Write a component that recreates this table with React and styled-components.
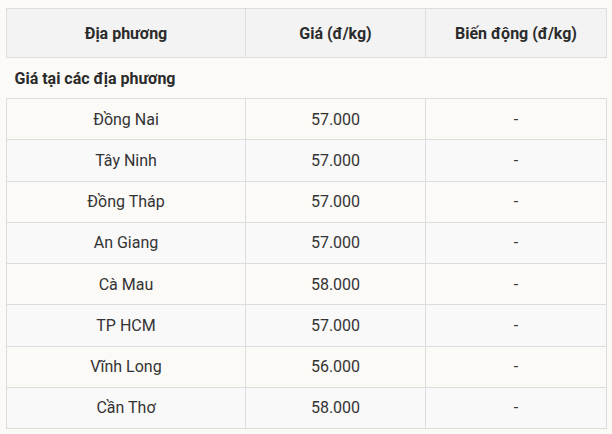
import React from "react";
import styled, { createGlobalStyle } from "styled-components";

const Global = createGlobalStyle`
  html, body { margin: 0; padding: 0; background: #fbfaf7; }
  body { font-family: Roboto, "Noto Sans", "Liberation Sans", sans-serif; color: #333; }
`;

const Page = styled.div`
  padding: 8px 6px 0 6px;
`;

const Table = styled.table`
  width: 600px;
  border-collapse: collapse;
  table-layout: fixed;
  font-size: 16px;
`;

const HeadCell = styled.th`
  height: 49px;
  padding: 0 8px;
  box-sizing: border-box;
  background: #f3f3f3;
  border: 1px solid #dddddd;
  font-weight: 700;
  color: #2b2b2b;
  text-align: center;
  vertical-align: middle;
`;

const SectionCell = styled.td`
  height: 41px;
  padding: 0 8px;
  box-sizing: border-box;
  font-weight: 700;
  color: #2b2b2b;
  text-align: left;
  vertical-align: middle;
  background: #fbfaf7;
  border: none;
`;

const Row = styled.tr`
  background: ${(p) => (p.$even ? "#f9f9f9" : "#fbfaf7")};
`;

const Cell = styled.td`
  height: 41.25px;
  padding: 0 8px;
  box-sizing: border-box;
  border: 1px solid #dddddd;
  text-align: center;
  vertical-align: middle;
  color: #333;
`;

const rows = [
  ["Đồng Nai", "57.000", "-"],
  ["Tây Ninh", "57.000", "-"],
  ["Đồng Tháp", "57.000", "-"],
  ["An Giang", "57.000", "-"],
  ["Cà Mau", "58.000", "-"],
  ["TP HCM", "57.000", "-"],
  ["Vĩnh Long", "56.000", "-"],
  ["Cần Thơ", "58.000", "-"],
];

export default function App() {
  return (
    <>
      <Global />
      <Page>
        <Table>
          <colgroup>
            <col style={{ width: "239px" }} />
            <col style={{ width: "180px" }} />
            <col style={{ width: "181px" }} />
          </colgroup>
          <thead>
            <tr>
              <HeadCell>Địa phương</HeadCell>
              <HeadCell>Giá (đ/kg)</HeadCell>
              <HeadCell>Biến động (đ/kg)</HeadCell>
            </tr>
          </thead>
          <tbody>
            <tr>
              <SectionCell colSpan={3}>Giá tại các địa phương</SectionCell>
            </tr>
            {rows.map((r, i) => (
              <Row key={r[0]} $even={i % 2 === 1}>
                <Cell>{r[0]}</Cell>
                <Cell>{r[1]}</Cell>
                <Cell>{r[2]}</Cell>
              </Row>
            ))}
          </tbody>
        </Table>
      </Page>
    </>
  );
}
